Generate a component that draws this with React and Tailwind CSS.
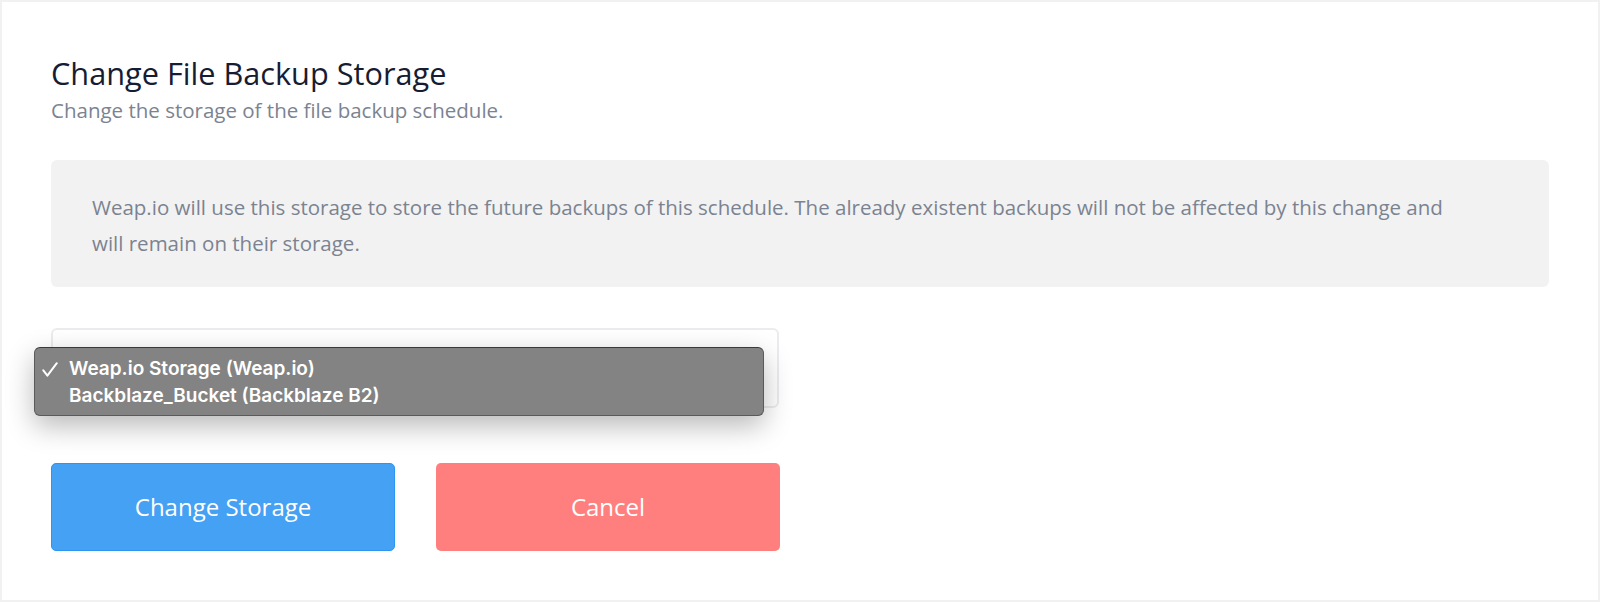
import React from "react";

const options = [
  { label: "Weap.io Storage (Weap.io)", selected: true },
  { label: "Backblaze_Bucket (Backblaze B2)", selected: false },
];

const Check = () => (
  <svg width="16" height="15" viewBox="0 0 16 15" fill="none">
    <path d="M1.3 8.4 L5.4 13.6 L14.8 1.2" stroke="white" strokeWidth="2" strokeLinecap="round" strokeLinejoin="round" />
  </svg>
);

const App = () => {
  return (
    <div className="w-[1600px] h-[602px] bg-white border-2 border-[#f1f1f1] px-[49px] pt-[53px] font-['Open_Sans','Noto_Sans',sans-serif] relative">
      {/* Heading */}
      <h1 className="text-[30.7px] leading-[36px] text-[#161c33]">Change File Backup Storage</h1>
      <p className="mt-[7px] text-[20.5px] leading-[24px] text-[#7b8391]">
        Change the storage of the file backup schedule.
      </p>

      {/* Info box */}
      <div className="mt-[38px] bg-[#f2f2f2] rounded-[6px] pl-[41px] pr-[20px] pt-[29px] pb-[26px]">
        <p className="text-[20.5px] leading-[36px] text-[#7b8391] whitespace-nowrap">
          Weap.io will use this storage to store the future backups of this schedule. The already existent backups will not be affected by this change and
          <br />
          will remain on their storage.
        </p>
      </div>

      {/* Select */}
      <div className="mt-[41px] w-[728px] h-[80px] border-2 border-[#ebecef] rounded-[6px] bg-white" />

      {/* Native dropdown menu */}
      <div className="absolute left-[32px] top-[345px] w-[730px] h-[69px] bg-[#838383] border border-[#5a5a5a] border-t-[#3a3a3a] rounded-[6px] shadow-[0_10px_28px_rgba(0,0,0,0.28)] pt-[8px] font-['Inter','Liberation_Sans',sans-serif]">
        {options.map((opt) => (
          <div key={opt.label} className="h-[27px] flex items-center text-white text-[19px] font-semibold">
            <span className="w-[34px] pl-[7px] flex items-center">{opt.selected && <Check />}</span>
            <span>{opt.label}</span>
          </div>
        ))}
      </div>

      {/* Buttons */}
      <div className="mt-[55px] flex gap-[41px]">
        <button className="w-[344px] h-[88px] rounded-[5px] bg-[#45a1f3] border border-[#2c95f0] text-white text-[24px]">
          Change Storage
        </button>
        <button className="w-[344px] h-[88px] rounded-[5px] bg-[#ff7f7e] text-white text-[24px]">
          Cancel
        </button>
      </div>
    </div>
  );
};

export default App;
